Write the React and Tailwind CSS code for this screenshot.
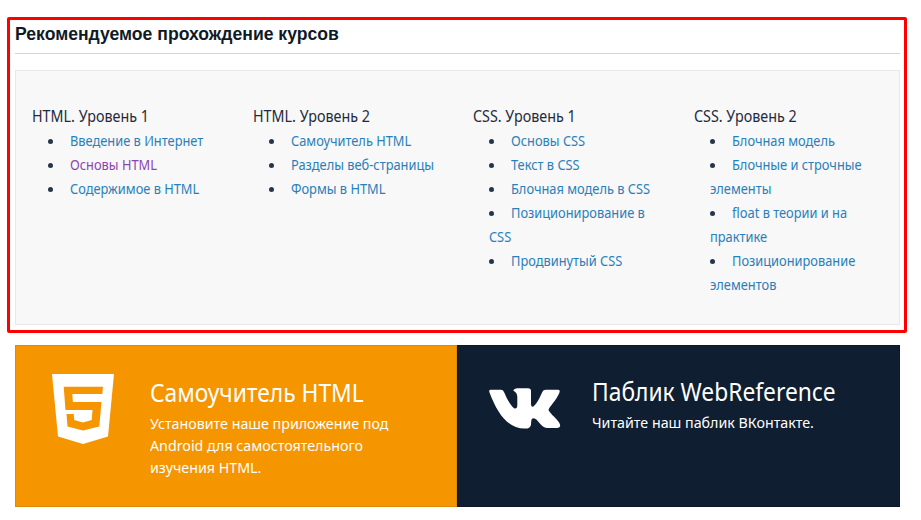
const columns = [
  { title: 'HTML. Уровень 1', items: [['Введение в Интернет'], ['Основы HTML'], ['Содержимое в HTML']], visited: 1 },
  { title: 'HTML. Уровень 2', items: [['Самоучитель HTML'], ['Разделы веб-страницы'], ['Формы в HTML']] },
  { title: 'CSS. Уровень 1', items: [['Основы CSS'], ['Текст в CSS'], ['Блочная модель в CSS'], ['Позиционирование в', 'CSS'], ['Продвинутый CSS']] },
  { title: 'CSS. Уровень 2', items: [['Блочная модель'], ['Блочные и строчные', 'элементы'], ['float в теории и на', 'практике'], ['Позиционирование', 'элементов']] },
];

function Column({ title, items, visited }) {
  return (
    <div className="w-[220.7px] shrink-0 whitespace-nowrap">
      <h3 className="-mt-px mb-px origin-left scale-x-[.895] text-[16px] leading-6 text-[#1f2b3d]">{title}</h3>
      <ul className="pl-4 text-[13.5px] leading-6">
        {items.map(([first, rest], i) => (
          <li key={first}>
            <div className="flex h-6 items-center">
              <span className="mr-[17px] size-[5px] shrink-0 rounded-full bg-[#26364a]" />
              <a className={`origin-left scale-x-[.95] ${i === visited ? 'text-[#8e44ad]' : 'text-[#2980b9]'}`}>{first}</a>
            </div>
            {rest && <a className="block origin-left scale-x-[.95] text-[#2980b9]">{rest}</a>}
          </li>
        ))}
      </ul>
    </div>
  );
}

export default function App() {
  return (
    <div className="h-[520px] w-[921px] overflow-hidden bg-white pt-[17px] font-['Noto_Sans','Open_Sans',sans-serif]">
      <section className="ml-[7px] h-[316px] w-[900px] rounded-[2px] border-[3px] border-[#ff0000] px-[5px] pr-1">
        <h2 className="h-[34px] w-[885px] border-b border-[#d1d5db] pt-[2px] font-['Liberation_Sans',Arial,sans-serif] text-[17.6px] leading-[24px] font-bold text-[#101a26]">
          Рекомендуемое прохождение курсов
        </h2>
        <div className="mt-4 flex h-[255px] w-[885px] border border-[#e8e8e8] bg-[#f8f8f8] pt-[34px] pl-4">
          {columns.map((c) => <Column key={c.title} {...c} />)}
        </div>
      </section>
      <section className="mt-3 ml-[15px] flex h-[162px] w-[885px] whitespace-nowrap text-white">
        <a className="flex w-[442px] border border-[#db8a0b] bg-[#f59500] pt-7 pl-9">
          <svg className="h-[70px] w-[62px] shrink-0" viewBox="0 0 62 70" fill="none">
            <path d="M0 0H62L56 62.5L31 70L6 62.5Z" fill="#fff" />
            <path d="M11.7 12.7H51L50.3 20H20.3L20.9 28H49.5L47.3 52.5L31 56.5L15.5 52.5L14.5 40H21.7L22.2 46L31 48.5L39.7 46L40.5 36H13.5Z" fill="#f59500" />
          </svg>
          <div className="ml-9 pt-[3px]">
            <h3 className="origin-left scale-x-[.912] text-[25px] leading-[31px]">Самоучитель HTML</h3>
            <p className="mt-1 origin-left scale-x-[.95] text-[15px] leading-[22px]">Установите наше приложение под<br />Android для самостоятельного<br />изучения HTML.</p>
          </div>
        </a>
        <a className="flex w-[443px] border border-[#0c1928] bg-[#0f1e30] pt-[42px] pl-[31px]">
          <svg className="h-[41px] w-[72px] shrink-0" viewBox="0 0 72 41" fill="#fff">
            <path d="M1.5 1.7H12Q14 1.7 15 4C18 11 22 18.5 25.5 20.5Q28.3 21 28.3 17V9Q28.3 4.5 24.3 2.7Q25 .3 28.5 .2H39Q42 .2 42 3V15.5Q42 19 44 18.7C48 16 51 9 53.3 4Q54.3 1.8 56.5 1.8H69Q71.6 1.8 70.3 5C67.5 12 60 19 59.5 22C61 26 70 32 71 36.5Q71.8 40 68 40H58C52 40 49 30.5 44.5 30.3Q42.2 30.3 42.2 34Q42.2 40 38.5 40.4C20 42 9 27 .5 4.5Q-.4 1.7 1.5 1.7Z" />
          </svg>
          <div className="-mt-[12px] ml-[31px]">
            <h3 className="origin-left scale-x-[.912] text-[25px] leading-[31px]">Паблик WebReference</h3>
            <p className="mt-1 origin-left scale-x-[.95] text-[15px] leading-[22px]">Читайте наш паблик ВКонтакте.</p>
          </div>
        </a>
      </section>
    </div>
  );
}
